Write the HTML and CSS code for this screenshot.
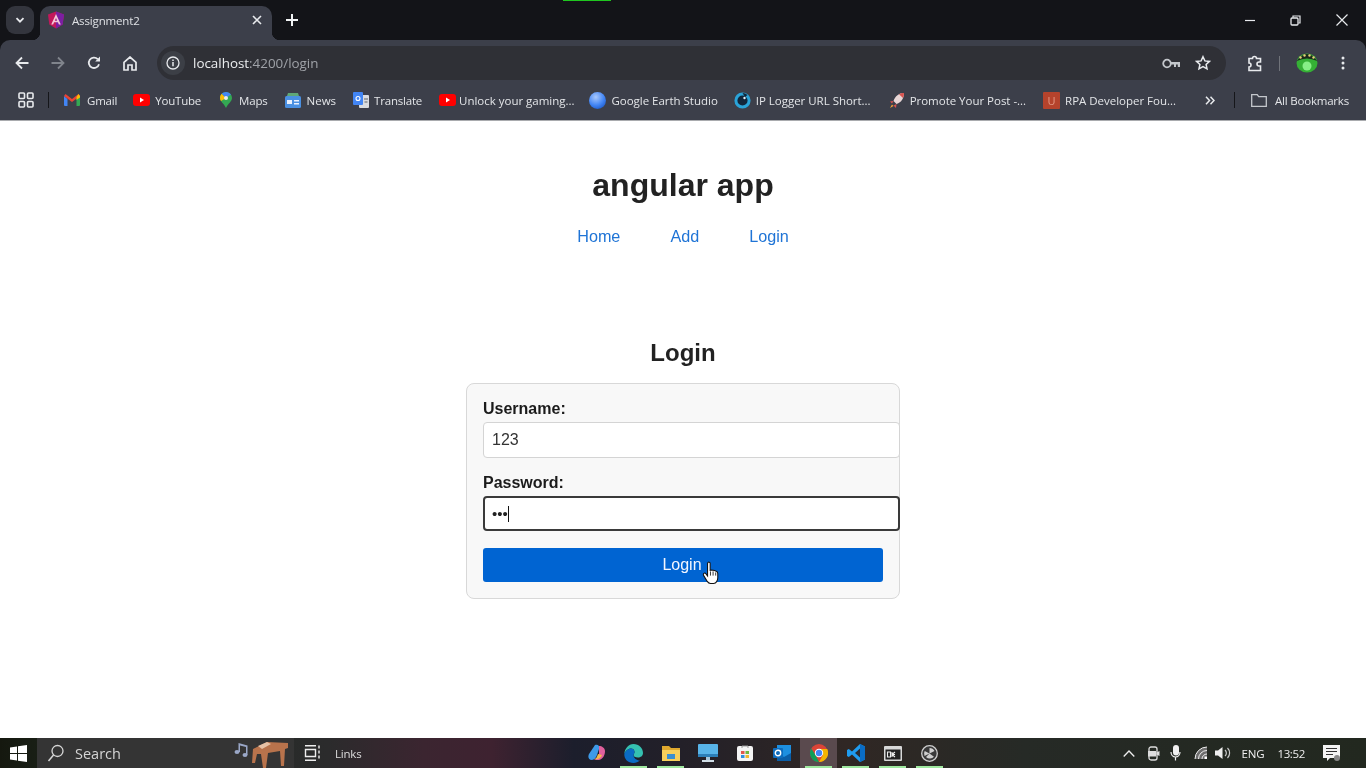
FILE: index.html
```html
<!DOCTYPE html>
<html lang="en">
<head>
<meta charset="utf-8">
<title>Assignment2</title>
<link rel="stylesheet" href="styles.css">
</head>
<body>
<div class="screen">
  <header class="chrome">
    <div class="tabstrip">
      <span class="progress"></span>
      <button class="tabmenu"><svg width="12" height="12" viewBox="0 0 12 12"><path d="M2.5 4.2 6 7.7l3.5-3.5" fill="none" stroke="#e8eaed" stroke-width="1.8"/></svg></button>
      <div class="tab">
        <svg class="fav" width="18" height="18" viewBox="0 0 18 18"><path d="M9 0.5 1 3.5l1.3 10L9 17.5l6.700-4 1.300-10z" fill="#c2185b"/><path d="M9 .5v17l6.700-4 1.300-10z" fill="#7b1fa2"/><path d="M9 3 4.200 13.500h1.900l1-2.300h3.800l1 2.300h1.900zm-1.200 6.700L9 6.900l1.200 2.800z" fill="#f3c7d8"/></svg>
        <span class="tabtitle">Assignment2</span>
        <svg class="tabx" width="10" height="10" viewBox="0 0 10 10"><path d="M1 1l8 8M9 1 1 9" stroke="#e8eaed" stroke-width="1.600"/></svg>
      </div>
      <svg class="newtab" width="12" height="12" viewBox="0 0 12 12"><path d="M6 0v12M0 6h12" stroke="#f1f3f4" stroke-width="2"/></svg>
      <div class="winctl">
        <svg width="10" height="10" viewBox="0 0 10 10"><path d="M0 5.500h10" stroke="#e8eaed" stroke-width="1.200"/></svg>
        <svg width="11" height="11" viewBox="0 0 11 11"><path d="M3 2.500V1h7v7H8.500" fill="none" stroke="#e8eaed" stroke-width="1.200"/><rect x="1" y="3" width="7" height="7" rx="1" fill="none" stroke="#e8eaed" stroke-width="1.300"/></svg>
        <svg width="12" height="12" viewBox="0 0 12 12"><path d="M.5.500l11 11M11.500.500l-11 11" stroke="#e8eaed" stroke-width="1.200"/></svg>
      </div>
    </div>
    <div class="toolbar">
      <svg class="tool" width="14" height="14" viewBox="0 0 14 14"><path d="M13.500 7H2M7 1.500 1.500 7 7 12.500" fill="none" stroke="#e8eaed" stroke-width="1.800"/></svg>
      <svg class="tool" width="14" height="14" viewBox="0 0 14 14"><path d="M.5 7H12M7 1.500 12.500 7 7 12.500" fill="none" stroke="#80848c" stroke-width="1.800"/></svg>
      <svg class="tool" width="14" height="14" viewBox="0 0 14 14"><path d="M12 8.200A5.200 5.200 0 1 1 10.700 3.100" fill="none" stroke="#e8eaed" stroke-width="1.800"/><path d="M8.200 5.400h4.800V.6z" fill="#e8eaed"/></svg>
      <svg class="tool home" width="14" height="15" viewBox="0 0 14 15"><path d="M1 6.300 7 1l6 5.300V14H9V9H5v5H1z" fill="none" stroke="#e8eaed" stroke-width="1.700"/></svg>
      <div class="omnibox">
        <span class="infochip"><svg width="14" height="14" viewBox="0 0 14 14"><circle cx="7" cy="7" r="6" fill="none" stroke="#e8eaed" stroke-width="1.300"/><path d="M7 6v4.200M7 3.600v1.400" stroke="#e8eaed" stroke-width="1.500"/></svg></span>
        <span class="url"><b>localhost</b>:4200/login</span>
        <svg class="omni-key" width="19" height="11" viewBox="0 0 19 11"><circle cx="5" cy="5.500" r="3.800" fill="none" stroke="#c4c7cc" stroke-width="1.800"/><path d="M9 4h9v5h-2.200V6.500H14V9h-2V6.500H9z" fill="#c4c7cc"/></svg>
        <svg class="omni-star" width="16" height="16" viewBox="0 0 16 16"><path d="m8 1.700 1.900 4.200 4.500.5-3.300 3 .9 4.500L8 11.600l-4 2.300.9-4.500-3.300-3 4.500-.5z" fill="none" stroke="#e8eaed" stroke-width="1.500"/></svg>
      </div>
      <svg class="ext" width="17" height="17" viewBox="0 0 17 17"><path d="M3 3.500h3.500a2 2 0 0 1 4 0H14.500V7h-1.500v0a2 2 0 0 0 0 4h1.500v4.500H3V12a2 2 0 0 0 0-4V3.500z" fill="none" stroke="#e8eaed" stroke-width="1.600"/></svg>
      <span class="sep"></span>
      <svg class="avatar" width="22" height="20" viewBox="0 0 22 20"><ellipse cx="11" cy="10" rx="10.500" ry="9.500" fill="#35b035"/><path d="M.8 8Q11-6 21.200 8 11 3 .8 8z" fill="#1c2b1c"/><circle cx="4.500" cy="4.500" r="1.200" fill="#e6d27a"/><circle cx="8.500" cy="2.500" r="1.200" fill="#e6d27a"/><circle cx="13.500" cy="2.500" r="1.200" fill="#e6d27a"/><circle cx="17.500" cy="4.500" r="1.200" fill="#e6d27a"/><circle cx="11" cy="13" r="4.500" fill="#86ef86"/></svg>
      <svg class="kebab" width="4" height="14" viewBox="0 0 4 14"><circle cx="2" cy="2" r="1.500" fill="#e8eaed"/><circle cx="2" cy="7" r="1.500" fill="#e8eaed"/><circle cx="2" cy="12" r="1.500" fill="#e8eaed"/></svg>
    </div>
    <nav class="bookmarks">
      <svg class="apps" width="16" height="16" viewBox="0 0 16 16"><g fill="none" stroke="#e8eaed" stroke-width="1.600"><rect x="1" y="1" width="5.500" height="5.500" rx="1"/><rect x="9.500" y="1" width="5.500" height="5.500" rx="1"/><rect x="1" y="9.500" width="5.500" height="5.500" rx="1"/><rect x="9.500" y="9.500" width="5.500" height="5.500" rx="1"/></g></svg>
      <span class="bsep first"></span>
      <a class="bm b-gmail"><svg width="16" height="12" viewBox="0 0 16 12"><path d="M0 2v9a1 1 0 0 0 1 1h2.500V5z" fill="#4285f4"/><path d="M16 2v9a1 1 0 0 1-1 1h-2.500V5z" fill="#34a853"/><path d="M0 2 8 8l8-6-1.500-2L8 5 1.500 0z" fill="#ea4335"/><path d="M12.500 3v3L16 3.500V2L14.500 0z" fill="#fbbc04"/></svg>Gmail</a>
      <a class="bm b-yt"><svg width="17" height="12" viewBox="0 0 17 12"><rect width="17" height="12" rx="3" fill="#f00"/><path d="m7 3.500 4 2.500-4 2.500z" fill="#fff"/></svg>YouTube</a>
      <a class="bm b-maps"><svg width="12" height="16" viewBox="0 0 12 16"><path d="M6 0a6 6 0 0 1 6 6c0 3.500-4 5.500-6 10C4 11.500 0 9.500 0 6a6 6 0 0 1 6-6z" fill="#34a853"/><path d="M1.800 1.800 6 6 1 9C.3 8 0 7 0 6c0-1.700.7-3.200 1.800-4.200z" fill="#fbbc04"/><path d="M6 0c2 0 3.800 1 4.900 2.500L6 6 1.800 1.800C2.900.7 4.400 0 6 0z" fill="#4285f4"/><circle cx="6" cy="6" r="2" fill="#e8eaed"/></svg>Maps</a>
      <a class="bm b-news"><svg width="16" height="16" viewBox="0 0 16 16"><rect y="4" width="16" height="12" rx="1.500" fill="#4a90e2"/><path d="M2 4 3 1h10l1 3z" fill="#5fa777"/><rect x="2" y="8" width="5" height="4" fill="#e8f0fe"/><rect x="9" y="8" width="5" height="1.500" fill="#e8f0fe"/><rect x="9" y="11" width="5" height="1.500" fill="#e8f0fe"/></svg>News</a>
      <a class="bm b-tr"><svg width="16" height="16" viewBox="0 0 16 16"><rect x="6" y="3" width="10" height="13" rx="1" fill="#dadce0"/><rect width="10" height="13" rx="1" fill="#4285f4"/><circle cx="5" cy="6.500" r="2" fill="none" stroke="#fff" stroke-width="1.100"/><path d="M11 7h4M11.500 10h3" stroke="#5f6368"/></svg>Translate</a>
      <a class="bm wide b-unlock"><svg width="17" height="12" viewBox="0 0 17 12"><rect width="17" height="12" rx="3" fill="#f00"/><path d="m7 3.500 4 2.500-4 2.500z" fill="#fff"/></svg>Unlock your gaming...</a>
      <a class="bm wide b-earth"><svg width="17" height="17" viewBox="0 0 17 17"><defs><radialGradient id="earth" cx=".4" cy=".3" r=".8"><stop offset="0" stop-color="#a9c8fb"/><stop offset=".6" stop-color="#4285f4"/><stop offset="1" stop-color="#1a56c4"/></radialGradient></defs><circle cx="8.500" cy="8.500" r="8.500" fill="url(#earth)"/></svg>Google Earth Studio</a>
      <a class="bm wide b-ip"><svg width="17" height="17" viewBox="0 0 17 17"><circle cx="8.500" cy="8.500" r="6.600" fill="#12263a" stroke="#2aa3d8" stroke-width="3"/><path d="M8.500 1a7.500 7.500 0 0 1 5 2L11 5z" fill="#12263a"/><circle cx="10.500" cy="6" r="1.200" fill="#dff4ff"/></svg>IP Logger URL Short...</a>
      <a class="bm wide b-rocket"><svg width="16" height="17" viewBox="0 0 16 17"><path d="M15 1c-5 0-9 3-10.500 8l3 3C12.500 10.500 15 6 15 1z" fill="#e8d6d6"/><path d="M15 1c-2 0-3.500.4-5 1.200L14 6c.7-1.500 1-3.200 1-5z" fill="#d9534f"/><path d="M4.500 9 1 9.500l2 2zM7.500 12 7 16l-2.500-2.500z" fill="#d9534f"/><path d="M3 12.500 1 16l3.500-2z" fill="#f2a33a"/></svg>Promote Your Post -...</a>
      <a class="bm wide b-rpa"><span class="rpa">U</span>RPA Developer Fou...</a>
      <svg class="more" width="10" height="9" viewBox="0 0 10 9"><path d="m1 .8 3.500 3.700L1 8.200M5.500.8 9 4.500 5.500 8.200" fill="none" stroke="#e8eaed" stroke-width="1.500"/></svg>
      <span class="bsep second"></span>
      <a class="bm b-all"><svg width="16" height="13" viewBox="0 0 16 13"><path d="M.7.700h5.500l1.500 2h7.600v9.600H.7z" fill="none" stroke="#c4c7cc" stroke-width="1.300"/></svg>All Bookmarks</a>
    </nav>
  </header>

  <main class="page">
    <h1 class="app-title">angular app</h1>
    <nav class="app-nav">
      <a>Home</a>
      <a>Add</a>
      <a>Login</a>
    </nav>
    <h2 class="login-title">Login</h2>
    <form class="login-card">
      <label class="field-label">Username:</label>
      <div class="input">123</div>
      <label class="field-label second-label">Password:</label>
      <div class="input focused"><span class="dots">•••</span><span class="caret"></span></div>
      <div class="submit">Login
        <svg class="hand" width="18" height="24" viewBox="0 0 16 23"><path d="M5 1.500c.8-.8 2-.5 2.200.6V9l1.300-.3 1.500.2 1.300.3 1.700.6c1 .4 1.500 1.200 1.500 2.300v4c0 2.500-1.500 5.400-4 5.400H7.500c-1.500 0-2.500-1-3.300-2.200L1 14c-.6-1-.4-2 .4-2.300.7-.3 1.500.2 2 .9l1.300 1.700V2.500z" fill="#fff" stroke="#111" stroke-width="1"/><path d="M7.500 10v4M10 10v4M12.500 11v3" stroke="#111" stroke-width=".8"/></svg>
      </div>
    </form>
  </main>

  <footer class="taskbar">
    <svg class="start" width="17" height="17" viewBox="0 0 17 17"><path d="M0 2.500 7 1.500V8H0zM8 1.300 17 0v8H8zM0 9h7v6.500L0 14.500zM8 9h9v8l-9-1.300z" fill="#fff"/></svg>
    <div class="searchbox">
      <svg width="18" height="18" viewBox="0 0 18 18"><circle cx="10.500" cy="7" r="5.500" fill="none" stroke="#d6d6d6" stroke-width="1.300"/><path d="M6.500 11 1.500 17" stroke="#d6d6d6" stroke-width="1.500"/></svg>
      <span>Search</span>
      <div class="search-art">
        <svg width="56" height="28" viewBox="0 0 56 28"><g fill="#9aa7c7"><ellipse cx="3" cy="12" rx="2.500" ry="2"/><ellipse cx="11" cy="15" rx="2.500" ry="2"/><path d="M4.500 12V3l9 2.500v9.500h-1.500V7L6 5.500V12z"/></g><path d="M19 9 33 2l21 1v5l-3 1-1 17h-3l-1-15-12 2-2 15h-3l-2-14-4 0-2 9h-3z" fill="#b8734c"/><path d="M24 6l9-4 4 2-9 5z" fill="#e7c2a6"/></svg>
      </div>
    </div>
    <svg class="taskview" width="17" height="16" viewBox="0 0 17 16"><path d="M1 .7h11M1 15.300h11M1.500 4.500h10v7h-10z" fill="none" stroke="#eee" stroke-width="1.400"/><path d="M15 .5v15" stroke="#eee" stroke-width="1.400" stroke-dasharray="3 2"/></svg>
    <span class="links">Links</span>
    <div class="apps-row">
      <span class="app"><svg width="18" height="18" viewBox="0 0 18 18"><path d="M7 1c3-1 5 1 4 4L9 11c-1 3-3 5-6 5-3-1-3-4-2-6z" fill="#3d9ae8"/><path d="M11 2c3 0 6 2 6 5 0 4-2 8-6 9-3 .5-5-1-5-1 3 0 4-2 5-5z" fill="#e0609c"/><path d="M6 15c4 1 7-1 8-4l-4-1c-1 3-2 5-4 5z" fill="#f5b84a"/></svg></span>
      <span class="app on"><svg width="19" height="19" viewBox="0 0 19 19"><path d="M9.500 0C15 0 19 4 19 9c0 3-2.500 4.500-5 4.500-3 0-4.500-1-4.500-2.500 0-1 1-1.500 1-3C10.500 5 8 4 6 4.500 3 5.300.8 8 .3 10 .7 4.500 4.500 0 9.500 0z" fill="#35c1b1"/><path d="M.3 10C.8 8 3 5.300 6 4.500 8 4 10.500 5 10.500 8c0 1.500-1 2-1 3 0 3 3 5.500 6.500 5.500C14 18 12 19 9.500 19 4 19 0 15 .3 10z" fill="#0a6cc4"/></svg></span>
      <span class="app on"><svg width="18" height="16" viewBox="0 0 18 16"><path d="M0 1h7l2 2h9v13H0z" fill="#e0a92e"/><path d="M0 5h18v11H0z" fill="#f6cf5b"/><rect x="5" y="9" width="8" height="5" fill="#3a8fd0"/></svg></span>
      <span class="app"><svg width="20" height="18" viewBox="0 0 20 18"><rect width="20" height="13" rx="1" fill="#58b4e8"/><rect y="10" width="20" height="3" fill="#2c7fb8"/><rect x="8" y="13" width="4" height="3" fill="#a9c8dc"/><rect x="4" y="16" width="12" height="2" fill="#d2dfe8"/></svg></span>
      <span class="app"><svg width="16" height="16" viewBox="0 0 16 16"><rect y="1" width="16" height="15" rx="2" fill="#f4f4f4"/><path d="M5 3V1h6v2" fill="none" stroke="#999" stroke-width="1"/><rect x="4" y="6" width="3.500" height="3" fill="#e2574c"/><rect x="8.500" y="6" width="3.500" height="3" fill="#6fb840"/><rect x="4" y="10" width="3.500" height="3" fill="#2f8ee0"/><rect x="8.500" y="10" width="3.500" height="3" fill="#f2b72e"/></svg></span>
      <span class="app"><svg width="18" height="16" viewBox="0 0 18 16"><path d="M4 0h14v14H4z" fill="#1d8fe0"/><path d="M4 8l7 4 7-4v8H4z" fill="#0a5ea8"/><rect y="3" width="10" height="10" rx="1" fill="#0f6cbd"/><circle cx="5" cy="8" r="2.700" fill="none" stroke="#fff" stroke-width="1.400"/></svg></span>
      <span class="app on active"><svg width="18" height="18" viewBox="0 0 18 18"><circle cx="9" cy="9" r="9" fill="#db4437"/><path d="M9 5h8.200A9 9 0 0 1 9 18l4-7z" fill="#f4b400"/><path d="M1.300 4.400 5.500 11 9 18A9 9 0 0 1 1.300 4.400z" fill="#0f9d58"/><circle cx="9" cy="9" r="4.200" fill="#fff"/><circle cx="9" cy="9" r="3.200" fill="#4285f4"/></svg></span>
      <span class="app on"><svg width="18" height="18" viewBox="0 0 18 18"><path d="M13 0 18 2.500v13L13 18 5 10.500 1.800 13 0 12V6l1.800-1L5 7.500z" fill="#1f9cf0"/><path d="M13 4.500 8 9l5 4.500z" fill="#2a2d35"/><path d="M13 0l5 2.500v13L13 18z" fill="#0a6cc4"/></svg></span>
      <span class="app on"><svg width="18" height="15" viewBox="0 0 18 15"><rect width="18" height="15" rx="1" fill="#d8d8d8"/><rect x="1.500" y="3.500" width="15" height="10" fill="#222"/><path d="M3.500 6h3v5h-3zM8 6v5M8 8.500h3M8 8.500l3-2.500M8 8.500l3 2.500" fill="none" stroke="#eee" stroke-width="1.100"/></svg></span>
      <span class="app on"><svg width="17" height="17" viewBox="0 0 17 17"><circle cx="8.500" cy="8.500" r="7.800" fill="#3a3a3a" stroke="#cfcfcf" stroke-width="1.300"/><path d="M8.500 3a5.500 5.500 0 0 1 5 3L8.500 8.500zM3.500 11A5.500 5.500 0 0 1 3.700 6l4.800 2.500zM13 11.700a5.500 5.500 0 0 1-8 .3l3.500-3.500z" fill="#cfcfcf"/></svg></span>
    </div>
    <div class="tray">
      <svg class="t-up" width="12" height="7" viewBox="0 0 12 7"><path d="M.7 6.500 6 1l5.300 5.500" fill="none" stroke="#eee" stroke-width="1.300"/></svg>
      <svg class="t-cam" width="13" height="15" viewBox="0 0 13 15"><rect x="2" y="1" width="8" height="13" rx="2" fill="none" stroke="#ddd" stroke-width="1.300"/><rect x="1" y="5" width="8" height="5.500" fill="#ddd"/><path d="M9.500 6.500 12.500 5v5l-3-1.500z" fill="#ddd"/></svg>
      <svg class="t-mic" width="11" height="16" viewBox="0 0 11 16"><rect x="3" y="0" width="6" height="10.500" rx="3" fill="#f0f0f0"/><path d="M1 7c0 3 2 5 4.500 5s4.500-2 4.500-5M5.500 12v3.500" fill="none" stroke="#f0f0f0" stroke-width="1.200"/></svg>
      <svg class="t-net" width="15" height="14" viewBox="0 0 15 14"><path d="M1 13A12 12 0 0 1 13 1v12z" fill="#6d6d6d"/><path d="M1 13A12 12 0 0 1 13 1M4.500 13A8.500 8.500 0 0 1 13 4.500M8 13a5 5 0 0 1 5-5" fill="none" stroke="#eee"/><rect x="10.500" y="10.500" width="2.500" height="2.500" fill="#fff"/></svg>
      <svg class="t-vol" width="16" height="14" viewBox="0 0 16 14"><path d="M0 4.500h3L7.500 1v12L3 9.500H0z" fill="#eee"/><path d="M10 4a4 4 0 0 1 0 6M12.500 2a7 7 0 0 1 0 10" fill="none" stroke="#ccc" stroke-width="1.200"/></svg>
      <span class="t-lang">ENG</span>
      <span class="t-time">13:52</span>
      <svg class="t-note" width="18" height="17" viewBox="0 0 18 17"><path d="M0 0h17v13H7l-3 3v-3H0z" fill="#f4f4f4"/><path d="M3 3.500h11M3 6.500h11M3 9.500h7" stroke="#333" stroke-width="1.100"/><circle cx="14" cy="13" r="3" fill="#888"/></svg>
    </div>
  </footer>
</div>
</body>
</html>
```
FILE: styles.css
```css
* { box-sizing: border-box; }
html, body { margin: 0; padding: 0; }
body { width: 1366px; height: 768px; overflow: hidden; background: #fff; font-family: "Liberation Sans", Arial, sans-serif; }
.screen { display: flex; flex-direction: column; width: 1366px; height: 768px; filter: blur(.35px); }
svg { display: block; flex: none; }

.chrome { flex: none; height: 121px; display: flex; flex-direction: column; font-family: "Open Sans", "Noto Sans", sans-serif; color: #e3e5e8; border-bottom: 1px solid #a9abae; background: #131418; }
.tabstrip { position: relative; height: 40px; flex: none; background: #131418; display: flex; align-items: center; }
.progress { position: absolute; left: 563px; top: 0; width: 48px; height: 1px; background: #1fc71f; }
.tabmenu { margin-left: 6px; width: 28px; height: 28px; border: 0; padding: 0; border-radius: 9px; background: #33353d; display: flex; align-items: center; justify-content: center; }
.tab { position: relative; margin-left: 6px; margin-top: 6px; width: 232px; height: 34px; background: #3c3f4a; border-radius: 10px 10px 0 0; display: flex; align-items: center; padding: 0 8px 6px 7px; }
.tab::before, .tab::after { content: ""; position: absolute; bottom: 0; width: 8px; height: 8px; }
.tab::before { left: -8px; background: radial-gradient(circle at 0 0, transparent 8px, #3c3f4a 8.500px); }
.tab::after { right: -8px; background: radial-gradient(circle at 100% 0, transparent 8px, #3c3f4a 8.500px); }
.tabtitle { margin-left: 7px; font-size: 11.500px; letter-spacing: -.15px; color: #dfe1e5; flex: 1; }
.tabx { margin-right: 2px; }
.newtab { margin-left: 14px; }
.winctl { margin-left: auto; display: flex; align-items: center; gap: 35px; padding-right: 18px; }

.toolbar { flex: none; height: 40px; background: #3c3f4a; border-radius: 10px 10px 0 0; display: flex; align-items: center; padding: 6px 0 0 15px; }
.tool { margin-right: 22px; }
.tool.home { margin-right: 20px; }
.omnibox { width: 1069px; height: 34px; background: #2f3036; border-radius: 17px; display: flex; align-items: center; padding: 0 15px 0 4px; }
.infochip { width: 24px; height: 24px; border-radius: 50%; background: #3c3f46; display: flex; align-items: center; justify-content: center; }
.url { margin-left: 8px; font-size: 13.400px; color: #9fa2a8; flex: 1; }
.url b { font-weight: 400; color: #eceef0; }
.omni-key { margin-right: 14px; }
.ext { margin-left: 20px; }
.sep { width: 1px; height: 15px; background: #70737a; margin-left: 16px; }
.avatar { margin-left: 16px; }
.kebab { margin-left: 23px; }

.bookmarks { position: relative; flex: none; height: 40px; background: #3c3f4a; display: flex; align-items: center; font-size: 11.500px; letter-spacing: -.2px; }
.apps { margin-left: 18px; }
.bsep { width: 1px; height: 16px; background: #15161a; }
.bsep.first { margin-left: 14px; }
.bm { display: flex; align-items: center; gap: 5px; color: #e3e5e8; white-space: nowrap; flex: none; }
.bm.wide { letter-spacing: -.02px; }
.b-gmail { margin-left: 15px; gap: 7px; }
.b-yt { margin-left: 16px; }
.b-maps { margin-left: 19px; gap: 7px; }
.b-news { margin-left: 17px; gap: 6px; letter-spacing: 0; }
.b-tr { margin-left: 17px; }
.b-unlock { margin-left: 17px; gap: 3px; }
.b-earth { margin-left: 15px; }
.b-ip { margin-left: 16px; }
.b-rocket { margin-left: 18px; }
.b-rpa { margin-left: 17px; }
.rpa { width: 17px; height: 17px; background: #b5432c; color: #e59a85; font-size: 11px; line-height: 17px; text-align: center; display: block; border-radius: 1px; }
.more { margin-left: 29px; }
.bsep.second { margin-left: 19px; }
.b-all { margin-left: 16px; gap: 8px; }

.page { flex: 1; background: #fff; display: flex; flex-direction: column; align-items: center; color: #222; min-height: 0; }
.app-title { margin: 46px 0 0; font-size: 32px; line-height: 37px; font-weight: 700; color: #222; }
.app-nav { margin-top: 22px; display: flex; gap: 50px; font-size: 16.200px; line-height: 20px; color: #1f74d6; }
.login-title { margin: 93px 0 0; font-size: 24px; line-height: 28px; font-weight: 700; color: #222; }
.login-card { margin-top: 16px; width: 434px; height: 216px; border: 1px solid #d8d8d8; border-radius: 8px; background: #f8f8f8; padding: 16px; }
.field-label { display: block; font-size: 16px; line-height: 18px; font-weight: 700; color: #1b1b1b; }
.second-label { margin-top: 16px; }
.input { margin-top: 4px; width: 417px; height: 36px; border: 1px solid #d4d4d4; border-radius: 4px; background: #fff; padding: 0 8px; display: flex; align-items: center; font-size: 16px; color: #333; }
.input.focused { border: 2px solid #3a3a3a; padding: 0 7px; height: 35px; }
.dots { font-size: 15px; color: #222; }
.caret { width: 1px; height: 16px; background: #111; }
.submit { position: relative; margin-top: 17px; width: 400px; height: 34px; border-radius: 3px; background: #0064d2; color: #f2f6ff; font-size: 16px; display: flex; align-items: center; justify-content: center; padding-right: 2px; }
.hand { position: absolute; left: 219px; top: 13px; }

.taskbar { position: relative; flex: none; height: 30px; display: flex; align-items: center; color: #eee; font-family: "Open Sans", "Noto Sans", sans-serif; background: linear-gradient(90deg, #15180f 0, #1f2a20 8%, #2b2b2c 24%, #3b2530 31%, #3e2230 36%, #1c1e2c 42%, #232028 50%, #302724 62%, #262a26 75%, #22281f 100%); }
.start { margin-left: 10px; }
.searchbox { width: 257px; height: 30px; margin-left: 10px; background: #343434; display: flex; align-items: center; padding-left: 10px; font-size: 14.500px; color: #d4d4d4; position: relative; flex: none; }
.searchbox span { margin-left: 10px; }
.search-art { position: absolute; left: 197px; top: 2px; }
.taskview { margin-left: 10px; }
.links { margin-left: 14px; font-size: 11.500px; letter-spacing: -.2px; color: #ddd; }
.apps-row { position: absolute; left: 578px; bottom: 0; height: 30px; display: flex; }
.app { position: relative; width: 37px; height: 30px; display: flex; align-items: center; justify-content: center; }
.app.on::after { content: ""; position: absolute; left: 5px; right: 5px; bottom: 0; height: 2px; background: #9fe89f; }
.app.active { background: #5a4a4e; }
.tray { margin-left: auto; display: flex; align-items: center; padding-right: 25px; font-size: 11.500px; letter-spacing: -.2px; }
.t-cam { margin-left: 12px; }
.t-mic { margin-left: 10px; }
.t-net { margin-left: 13px; }
.t-vol { margin-left: 6px; }
.t-lang { margin-left: 11px; }
.t-time { margin-left: 13px; letter-spacing: -.35px; }
.t-note { margin-left: 18px; }
```
